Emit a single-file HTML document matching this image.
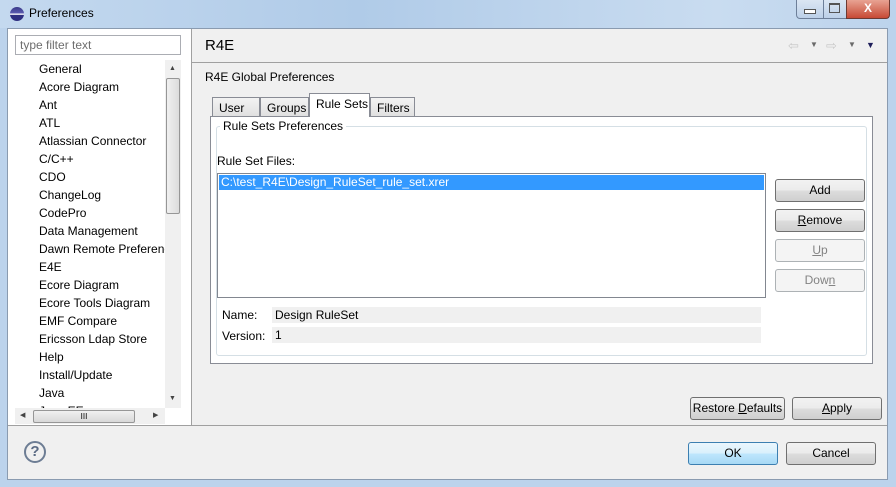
<!DOCTYPE html><html><head><style>
body{margin:0;width:896px;height:487px;overflow:hidden;background:#bcd3ec;font-family:"Liberation Sans",sans-serif;font-size:12px;color:#000;position:relative}
.a{position:absolute}
.btn{position:absolute;border:1px solid #707070;border-radius:3px;background:linear-gradient(#f2f2f2 0%,#ebebeb 50%,#dddddd 51%,#cfcfcf 100%);text-align:center;box-sizing:border-box;line-height:20px}
.dis{border-color:#adb2b5;background:#f4f4f4;color:#838383}
.tab{position:absolute;border:1px solid #898c95;border-bottom:none;background:linear-gradient(#f3f3f3,#e0e0e0);box-sizing:border-box;padding:3px 0 0 6px}
.ti{position:absolute;left:39px}
</style></head><body>
<div class="a" style="left:0;top:0;width:896px;height:28px;background:linear-gradient(90deg,#c4d9ef,#b0cbe8 40%,#c9dcf0 80%,#bcd3ec)"></div>
<div class="a" style="left:10px;top:7px;width:14px;height:14px;border-radius:50%;background:linear-gradient(#3a3a8a,#5b5bb0 45%,#fff 46%,#fff 55%,#2f2f80 56%)"></div>
<div class="a" style="left:29px;top:6px;font-size:12px">Preferences</div>
<div class="a" style="left:796px;top:0;width:26px;height:18px;border:1px solid #6d7f99;border-top:none;border-radius:0 0 0 4px;background:linear-gradient(#dbe6f3,#bcd0e8)"></div>
<div class="a" style="left:823px;top:0;width:22px;height:18px;border:1px solid #6d7f99;border-top:none;background:linear-gradient(#dbe6f3,#bcd0e8)"></div>
<div class="a" style="left:846px;top:0;width:42px;height:18px;border:1px solid #6d3a33;border-top:none;border-radius:0 0 4px 0;background:linear-gradient(#e8a393,#c74a35);color:#fff;text-align:center;font-weight:bold;line-height:17px">X</div>
<div class="a" style="left:804px;top:9px;width:10px;height:3px;border:1px solid #555;background:#fff"></div>
<div class="a" style="left:829px;top:3px;width:9px;height:7px;border:1px solid #555;border-top-width:2px"></div>
<!-- client -->
<div class="a" style="left:7px;top:28px;width:881px;height:452px;background:#f0f0f0;border:1px solid #8a9bb0;box-sizing:border-box"></div>
<div class="a" style="left:8px;top:29px;width:183px;height:396px;background:#fff"></div>
<div class="a" style="left:191px;top:29px;width:1px;height:397px;background:#a0a0a0"></div>
<div class="a" style="left:8px;top:425px;width:879px;height:1px;background:#a0a0a0"></div>
<div class="a" style="left:15px;top:35px;width:166px;height:20px;border:1px solid #abadb3;box-sizing:border-box;color:#6d6d6d;padding:2px 4px">type filter text</div>
<div class="a" style="left:15px;top:60px;font-size:12px;line-height:18px">
<div style="padding-left:24px">General<br>Acore Diagram<br>Ant<br>ATL<br>Atlassian Connector<br>C/C++<br>CDO<br>ChangeLog<br>CodePro<br>Data Management<br>Dawn Remote Preferenc<br>E4E<br>Ecore Diagram<br>Ecore Tools Diagram<br>EMF Compare<br>Ericsson Ldap Store<br>Help<br>Install/Update<br>Java<br>Java EE</div></div>
<div class="a" style="left:165px;top:60px;width:16px;height:348px;background:#f0f0f0"></div>
<div class="a" style="left:166px;top:78px;width:14px;height:136px;border:1px solid #969696;border-radius:2px;background:linear-gradient(90deg,#f0f0f0,#dcdcdc);box-sizing:border-box"></div>
<div class="a" style="left:169px;top:65px;font-size:7px;color:#444">▲</div>
<div class="a" style="left:169px;top:395px;font-size:7px;color:#444">▼</div>
<div class="a" style="left:15px;top:408px;width:150px;height:16px;background:#f0f0f0"></div>
<div class="a" style="left:33px;top:410px;width:102px;height:13px;border:1px solid #969696;border-radius:2px;background:linear-gradient(#f0f0f0,#d8d8d8);box-sizing:border-box;text-align:center;font-size:8px;line-height:11px">III</div>
<div class="a" style="left:20px;top:411px;font-size:7px;color:#444">◀</div>
<div class="a" style="left:153px;top:411px;font-size:7px;color:#444">▶</div>
<!-- right -->
<div class="a" style="left:205px;top:37px;font-size:15px">R4E</div>
<div class="a" style="left:192px;top:62px;width:695px;height:1px;background:#a0a0a0"></div>
<div class="a" style="left:788px;top:38px;color:#c8c8c8;font-size:13px">⇦</div>
<div class="a" style="left:810px;top:40px;color:#6a6a6a;font-size:8px">▼</div>
<div class="a" style="left:826px;top:38px;color:#c8c8c8;font-size:13px">⇨</div>
<div class="a" style="left:848px;top:40px;color:#6a6a6a;font-size:8px">▼</div>
<div class="a" style="left:866px;top:40px;color:#1e1e5a;font-size:9px">▼</div>
<div class="a" style="left:205px;top:70px">R4E Global Preferences</div>
<div class="a" style="left:210px;top:116px;width:663px;height:248px;border:1px solid #898c95;background:#fff;box-sizing:border-box"></div>
<div class="tab" style="left:212px;top:97px;width:48px;height:19px">User</div>
<div class="tab" style="left:260px;top:97px;width:49px;height:19px">Groups</div>
<div class="tab" style="left:309px;top:93px;width:61px;height:24px;background:#fff">Rule Sets</div>
<div class="tab" style="left:370px;top:97px;width:45px;height:19px">Filters</div>
<div class="a" style="left:216px;top:126px;width:651px;height:230px;border:1px solid #d5dfe5;border-radius:3px;box-sizing:border-box"></div>
<div class="a" style="left:220px;top:119px;background:#fff;padding:0 3px">Rule Sets Preferences</div>
<div class="a" style="left:217px;top:154px">Rule Set Files:</div>
<div class="a" style="left:217px;top:173px;width:549px;height:125px;border:1px solid #828790;box-sizing:border-box;background:#fff"></div>
<div class="a" style="left:219px;top:175px;width:545px;height:15px;background:#3399ff;color:#fff;line-height:15px;padding-left:2px;box-sizing:border-box">C:\test_R4E\Design_RuleSet_rule_set.xrer</div>
<div class="btn" style="left:775px;top:179px;width:90px;height:23px">Add</div>
<div class="btn" style="left:775px;top:209px;width:90px;height:23px"><u>R</u>emove</div>
<div class="btn dis" style="left:775px;top:239px;width:90px;height:23px"><u>U</u>p</div>
<div class="btn dis" style="left:775px;top:269px;width:90px;height:23px">Dow<u>n</u></div>
<div class="a" style="left:222px;top:308px">Name:</div>
<div class="a" style="left:272px;top:307px;width:489px;height:16px;background:#f0f0f0;padding:1px 3px;box-sizing:border-box">Design RuleSet</div>
<div class="a" style="left:222px;top:329px">Version:</div>
<div class="a" style="left:272px;top:327px;width:489px;height:16px;background:#f0f0f0;padding:1px 3px;box-sizing:border-box">1</div>
<div class="btn" style="left:690px;top:397px;width:95px;height:23px">Restore <u>D</u>efaults</div>
<div class="btn" style="left:792px;top:397px;width:90px;height:23px"><u>A</u>pply</div>
<div class="a" style="left:24px;top:441px;width:18px;height:18px;border:2px solid #6d7d94;border-radius:50%;color:#5a6a84;text-align:center;font-weight:bold;font-size:15px;line-height:18px">?</div>
<div class="btn" style="left:688px;top:442px;width:90px;height:23px;border-color:#3c7fb1;background:linear-gradient(#eaf6fd,#d9f0fc 50%,#bee6fd 51%,#a7d9f5)">OK</div>
<div class="btn" style="left:786px;top:442px;width:90px;height:23px">Cancel</div>
</body></html>
